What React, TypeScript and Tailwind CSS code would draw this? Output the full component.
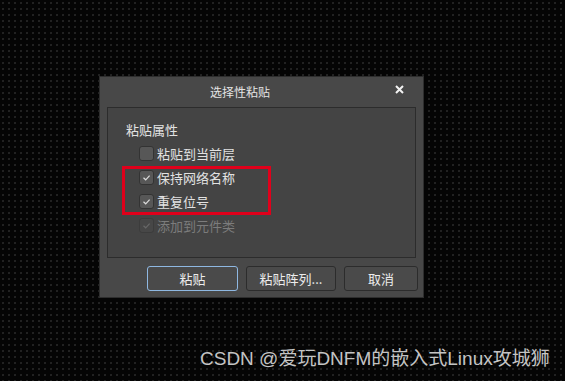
import React from "react";

const cjk = { fontFamily: '"Noto Sans CJK SC", "Noto Sans", sans-serif' };

function Check({ checked, disabled }: { checked?: boolean; disabled?: boolean }) {
    return (
        <span
            className={
                "flex items-center justify-center w-[15px] h-[15px] rounded-[3px] border " +
                (disabled ? "border-[#3c3c3c] bg-[#474747]" : "border-[#333333] bg-[#575757]")
            }
        >
            {checked && (
                <svg width="11" height="11" viewBox="0 0 11 11">
                    <polyline
                        points="2.5,5.8 4.7,7.8 8.6,3.6"
                        fill="none"
                        stroke={disabled ? "#686868" : "#dcdcdc"}
                        strokeWidth="1.2"
                    />
                </svg>
            )}
        </span>
    );
}

function Row({ label, checked, disabled }: { label: string; checked?: boolean; disabled?: boolean }) {
    return (
        <div className="flex items-center gap-[3px] h-[24px]">
            <Check checked={checked} disabled={disabled} />
            <span className={"text-[13px] leading-none " + (disabled ? "text-[#7c7c7c]" : "text-[#e2e2e2]")}>
                {label}
            </span>
        </div>
    );
}

export default function App() {
    return (
        <div
            className="relative w-[565px] h-[381px] overflow-hidden bg-[#050505] bg-[radial-gradient(circle,#242424_0.7px,transparent_0.8px)] bg-[size:6px_6px] pt-[76px] pl-[99px]"
            style={cjk}
        >
            <div className="w-[325px] h-[222px] bg-[#484848] border border-[#2e2e2e] flex flex-col">
                <div className="relative h-[30px] flex items-center">
                    <span className="pl-[110px] text-[12px] text-[#e4e4e4]">选择性粘贴</span>
                    <svg className="absolute left-[295px] top-[8px]" width="9" height="9" viewBox="0 0 9 9">
                        <path d="M1 1 L8 8 M8 1 L1 8" stroke="#f2f2f2" strokeWidth="2" />
                    </svg>
                </div>
                <div className="mx-[7px] h-[151px] bg-[#444444] border border-[#2c2c2c] pt-[15px] pl-[18px]">
                    <div className="text-[13px] leading-none text-[#e2e2e2]">粘贴属性</div>
                    <div className="mt-[5px] pl-[13px] flex flex-col">
                        <Row label="粘贴到当前层" />
                        <Row label="保持网络名称" checked />
                        <Row label="重复位号" checked />
                        <Row label="添加到元件类" checked disabled />
                    </div>
                </div>
                <div className="flex gap-[8px] mt-[8px] pl-[47px]">
                    <button className="w-[91px] h-[25px] rounded-[3px] border border-[#8fb8e2] bg-[#4a4a4a] text-[13px] text-[#ececec]">
                        粘贴
                    </button>
                    <button className="w-[90px] h-[25px] rounded-[3px] border border-[#2c2c2c] bg-[#4a4a4a] text-[13px] text-[#ececec]">
                        粘贴阵列...
                    </button>
                    <button className="w-[74px] h-[25px] rounded-[3px] border border-[#2c2c2c] bg-[#4a4a4a] text-[13px] text-[#ececec]">
                        取消
                    </button>
                </div>
            </div>

            <div className="absolute left-[122px] top-[166px] w-[149px] h-[49px] border-[3px] border-[#e0001b]" />

            <div
                className="absolute left-[200px] top-[349px] text-[19px] leading-none text-[#c4c4c4] whitespace-nowrap"
                style={{ fontFamily: '"Liberation Sans", "Noto Sans CJK SC", sans-serif' }}
            >
                CSDN @爱玩DNFM的嵌入式Linux攻城狮
            </div>
        </div>
    );
}
